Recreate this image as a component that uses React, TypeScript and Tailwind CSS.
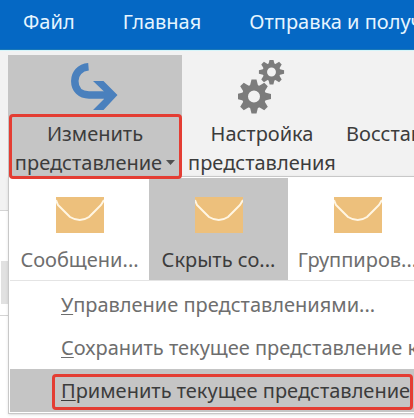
const tabs = ["Файл", "Главная", "Отправка и получение"];

const views = [
  { label: "Сообщени...", active: false },
  { label: "Скрыть со...", active: true },
  { label: "Группиров...", active: false },
];

const commands = [
  { hotkey: "У", rest: "правление представлениями...", active: false },
  { hotkey: "С", rest: "охранить текущее представление как...", active: false },
  { hotkey: "П", rest: "рименить текущее представление", active: true },
];

function ArrowIcon() {
  return (
    <svg width="48" height="48" viewBox="0 0 48 48" className="text-[#4a80bd]">
      <path
        d="M17.500 3.800C9 4.500 3.800 10.500 3.800 18C3.800 26.500 9.500 32 18 32H36"
        fill="none"
        stroke="currentColor"
        strokeWidth="7.500"
      />
      <path d="M22 18H32.500L46.500 32L32.500 47H22L33 36V28.500Z" fill="currentColor" />
    </svg>
  );
}

function Gear({ x, y, scale }: { x: number; y: number; scale: number }) {
  return (
    <g transform={`translate(${x} ${y}) scale(${scale})`}>
      {[0, 45, 90, 135, 180, 225, 270, 315].map((angle) => (
        <path key={angle} d="M-4.500 -9L-2.500 -17H2.500L4.500 -9Z" transform={`rotate(${angle})`} />
      ))}
      <path
        fillRule="evenodd"
        d="M0 -12A12 12 0 1 0 0 12A12 12 0 1 0 0 -12ZM0 -6A6 6 0 1 1 0 6A6 6 0 1 1 0 -6Z"
      />
    </g>
  );
}

function GearsIcon() {
  return (
    <svg width="48" height="54" viewBox="0 0 48 54" className="fill-[#7c7c7c]">
      <Gear x={16} y={36.5} scale={1} />
      <Gear x={33.5} y={12} scale={0.74} />
    </svg>
  );
}

function EnvelopeIcon() {
  return (
    <svg width="48" height="36" viewBox="0 0 48 36">
      <rect width="48" height="36" fill="#edc07c" />
      <path
        d="M0 3L2 8L8 14L14 20Q24 26 33 20L39 14L45 8L48 3"
        fill="none"
        stroke="#fff6e4"
        strokeWidth="2"
      />
    </svg>
  );
}

export default function App() {
  return (
    <div className="min-h-screen overflow-hidden bg-white font-['Noto_Sans',sans-serif] text-xl whitespace-nowrap text-[#3c3c3c]">
      <nav className="flex h-[50px] gap-12 border-b border-[#1a78b8] bg-[#0568c4] pl-[23px] text-[#e6f5ff]">
        {tabs.map((tab) => (
          <button key={tab} className="h-11 shrink-0">
            {tab}
          </button>
        ))}
      </nav>

      <div className="relative">
        <div className="flex h-[126px] gap-2 border-t border-[#d5f5fa] bg-[#f2f2f2] pt-1 pl-2">
          <button className="flex w-[174px] shrink-0 flex-col items-center justify-start bg-[#c5c5c5]">
            <span className="flex h-16 shrink-0 items-center">
              <ArrowIcon />
            </span>
            <span className="leading-[29px]">Изменить</span>
            <span className="flex items-center gap-1 leading-[29px]">
              представление
              <svg width="9" height="5" viewBox="0 0 9 5" className="fill-[#505050]">
                <path d="M0 0H9L4.500 5Z" />
              </svg>
            </span>
          </button>
          <button className="flex w-[144px] shrink-0 flex-col items-center justify-start">
            <span className="flex h-16 shrink-0 items-center">
              <GearsIcon />
            </span>
            <span className="leading-[29px]">Настройка</span>
            <span className="leading-[29px]">представления</span>
          </button>
          <button className="flex shrink-0 flex-col items-start justify-start pt-16 pl-1">
            <span className="leading-[29px]">Восстановить</span>
          </button>
        </div>

        <div className="h-[35px] border-b border-[#d4d4d4] bg-[#f2f2f2]" />
        <div className="h-[50px]" />
        <div className="ml-px h-[43px] bg-[#e1e1e1]" />
        <div className="h-3 border-b border-[#d4d4d4]" />

        <div className="absolute top-[126px] left-2 w-[calc(100%+8px)] border border-[#c8c8c8] bg-white p-px text-[#6e6e6e] shadow">
          <div className="flex border-b border-[#e4e4e4]">
            {views.map((view) => (
              <button
                key={view.label}
                className={`flex h-[102px] w-[139px] shrink-0 flex-col items-center pt-[19px] ${
                  view.active ? "bg-[#c5c5c5] text-[#3c3c3c]" : ""
                }`}
              >
                <EnvelopeIcon />
                <span className="mt-[13px] leading-7">{view.label}</span>
              </button>
            ))}
          </div>
          <div className="flex flex-col pt-0.5">
            {commands.map((command) => (
              <button
                key={command.hotkey}
                className={`h-[43px] pl-[51px] text-left ${
                  command.active ? "bg-[#c5c5c5] text-[#3c3c3c]" : ""
                }`}
              >
                <span className="underline decoration-1 underline-offset-2">{command.hotkey}</span>
                {command.rest}
              </button>
            ))}
          </div>
        </div>

        <div className="pointer-events-none absolute top-16 left-[9px] h-[65px] w-[173px] rounded-sm border-3 border-[#e43d33]" />
        <div className="pointer-events-none absolute top-[324px] right-px left-[52px] h-9 rounded-sm border-3 border-[#e43d33]" />
      </div>
    </div>
  );
}
